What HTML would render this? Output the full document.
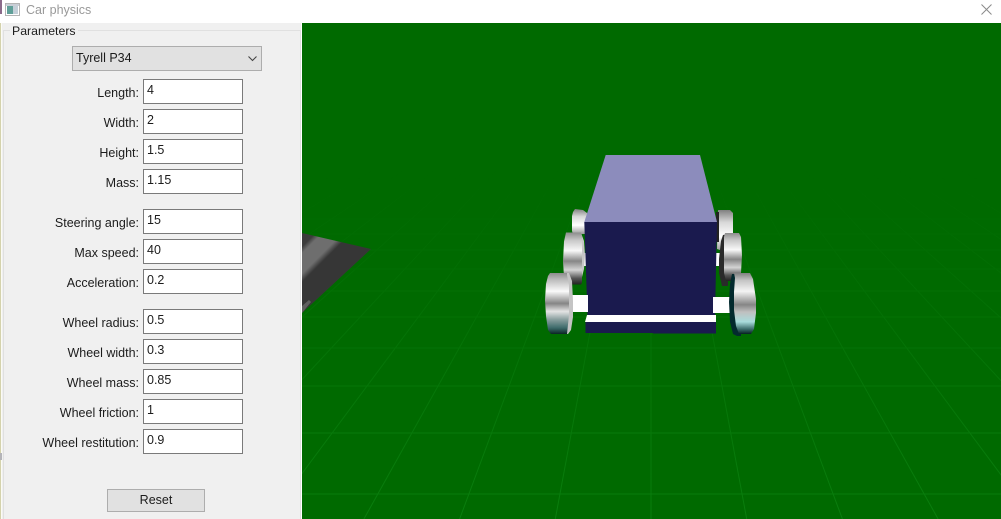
<!DOCTYPE html>
<html><head><meta charset="utf-8"><title>Car physics</title>
<style>
html,body{margin:0;padding:0;width:1001px;height:519px;overflow:hidden;background:#f0f0f0;font-family:"Liberation Sans",sans-serif;font-size:13px;color:#1c1c1c}
.a{position:absolute}
#title{left:0;top:0;width:1001px;height:23px;background:#fff}
#tt{left:26px;top:2px;color:#999;font-size:12.5px;line-height:16px}
#panel{left:0;top:23px;width:301px;height:496px;background:#f0f0f0}
#sep{left:301px;top:23px;width:1px;height:496px;background:#fff}
#e1{left:0;top:23px;width:1px;height:496px;background:#d4d2ac}
#e2{left:1px;top:23px;width:1px;height:496px;background:#fbfbf6}
#e3{left:0;top:453px;width:2px;height:7px;background:#b4b4b8}
#gb{left:3px;top:30px;width:298px;height:489px;border:1px solid #e0e0e0;border-bottom:0;box-sizing:border-box}
#lg{left:10px;top:24px;padding:0 2px;background:#f0f0f0;line-height:14px;font-size:12.3px}
#combo{left:72px;top:46px;width:190px;height:25px;box-sizing:border-box;background:#e1e1e1;border:1px solid #adadad;padding-left:3px;line-height:23px;font-size:12.5px}
.l{right:862px;text-align:right;white-space:nowrap;line-height:16px;font-size:12.5px}
.i{left:143px;width:100px;height:25px;box-sizing:border-box;background:#fff;border:1px solid #7a7a7a;padding-left:3px;line-height:21px;font-size:12.5px}
#reset{left:107px;top:489px;width:98px;height:23px;box-sizing:border-box;background:#e1e1e1;border:1px solid #adadad;text-align:center;line-height:21px;font-size:12.5px}
svg{display:block}
</style></head><body>
<div class="a" id="title"></div>
<svg class="a" style="left:0;top:0" width="30" height="23">
<rect x="0" y="0" width="2" height="14" fill="#8a6a8a"/>
<rect x="5.5" y="3.5" width="14" height="12" fill="#fff" stroke="#b4b4b4"/>
<rect x="6" y="4" width="13" height="2" fill="#c8ced6"/>
<rect x="7" y="6" width="6" height="8" fill="#5f9f98"/>
<rect x="13" y="6" width="5" height="8" fill="#c4cfd8"/>
</svg>
<div class="a" id="tt">Car physics</div>
<svg class="a" style="left:980px;top:3px" width="14" height="13"><path d="M1.500 1.500L11.500 11.500M11.500 1.500L1.500 11.500" stroke="#8a8a8a" stroke-width="1" fill="none"/></svg>

<div class="a" id="panel"></div>
<div class="a" id="sep"></div>
<div class="a" id="e1"></div><div class="a" id="e2"></div><div class="a" id="e3"></div>
<div class="a" id="gb"></div>
<div class="a" id="lg">Parameters</div>
<div class="a" id="combo">Tyrell P34</div>
<svg class="a" style="left:247px;top:55px" width="12" height="8"><path d="M1.500 1.500L5.500 5.500L9.500 1.500" stroke="#444" stroke-width="1.100" fill="none"/></svg>

<div class="a l" style="top:85px">Length:</div><div class="a i" style="top:79px">4</div>
<div class="a l" style="top:115px">Width:</div><div class="a i" style="top:109px">2</div>
<div class="a l" style="top:145px">Height:</div><div class="a i" style="top:139px">1.5</div>
<div class="a l" style="top:175px">Mass:</div><div class="a i" style="top:169px">1.15</div>
<div class="a l" style="top:215px">Steering angle:</div><div class="a i" style="top:209px">15</div>
<div class="a l" style="top:245px">Max speed:</div><div class="a i" style="top:239px">40</div>
<div class="a l" style="top:275px">Acceleration:</div><div class="a i" style="top:269px">0.2</div>
<div class="a l" style="top:315px">Wheel radius:</div><div class="a i" style="top:309px">0.5</div>
<div class="a l" style="top:345px">Wheel width:</div><div class="a i" style="top:339px">0.3</div>
<div class="a l" style="top:375px">Wheel mass:</div><div class="a i" style="top:369px">0.85</div>
<div class="a l" style="top:405px">Wheel friction:</div><div class="a i" style="top:399px">1</div>
<div class="a l" style="top:435px">Wheel restitution:</div><div class="a i" style="top:429px">0.9</div>
<div class="a" id="reset">Reset</div>

<svg class="a" style="left:302px;top:23px" width="699" height="496" viewBox="302 23 699 496">
<defs>
<linearGradient id="fade" gradientUnits="userSpaceOnUse" x1="0" y1="170" x2="0" y2="519">
<stop offset="0" stop-color="#fff" stop-opacity="0"/>
<stop offset=".3" stop-color="#fff" stop-opacity=".25"/>
<stop offset=".6" stop-color="#fff" stop-opacity=".6"/>
<stop offset="1" stop-color="#fff" stop-opacity="1"/>
</linearGradient>
<mask id="m" maskUnits="userSpaceOnUse" x="302" y="23" width="699" height="496"><rect x="302" y="23" width="699" height="496" fill="url(#fade)"/></mask>
<linearGradient id="road" gradientUnits="userSpaceOnUse" x1="302" y1="233" x2="344.500" y2="275.500">
<stop offset="0" stop-color="#3a3a3a"/><stop offset=".16" stop-color="#3c3c3c"/>
<stop offset=".24" stop-color="#6e6e6e"/><stop offset=".48" stop-color="#6e6e6e"/>
<stop offset=".58" stop-color="#363636"/><stop offset="1" stop-color="#363636"/>
</linearGradient>
<linearGradient id="wl" x1="0" y1="0" x2="0" y2="1">
<stop offset="0" stop-color="#8c8c8c"/><stop offset=".1" stop-color="#b8b8b8"/>
<stop offset=".3" stop-color="#fafafa"/><stop offset=".5" stop-color="#858585"/>
<stop offset=".63" stop-color="#e4e4e4"/><stop offset=".76" stop-color="#8ba0a0"/>
<stop offset=".9" stop-color="#3c6a6a"/><stop offset="1" stop-color="#0b2424"/>
</linearGradient>
<linearGradient id="wr" x1="0" y1="0" x2="0" y2="1">
<stop offset="0" stop-color="#808080"/><stop offset=".12" stop-color="#c4c4c4"/>
<stop offset=".3" stop-color="#f4f4f4"/><stop offset=".52" stop-color="#868686"/>
<stop offset=".64" stop-color="#c0c0c0"/><stop offset=".8" stop-color="#a8dcdc"/>
<stop offset=".92" stop-color="#3c6c6c"/><stop offset="1" stop-color="#062020"/>
</linearGradient>
<linearGradient id="wm" x1="0" y1="0" x2="0" y2="1">
<stop offset="0" stop-color="#8c8c8c"/><stop offset=".15" stop-color="#c8c8c8"/>
<stop offset=".35" stop-color="#f8f8f8"/><stop offset=".55" stop-color="#868686"/>
<stop offset=".72" stop-color="#d4d4d4"/><stop offset=".88" stop-color="#555"/>
<stop offset="1" stop-color="#222"/>
</linearGradient>
<linearGradient id="wb" x1="0" y1="0" x2="0" y2="1">
<stop offset="0" stop-color="#808080"/><stop offset=".3" stop-color="#d8d8d8"/>
<stop offset=".65" stop-color="#fff"/><stop offset="1" stop-color="#999"/>
</linearGradient>
</defs>
<rect x="302" y="23" width="699" height="496" fill="#006a00"/>
<g mask="url(#m)" stroke="#0a7e0e" stroke-width="1" fill="none">
<path d="M302 494H1001M302 433H1001M302 386H1001M302 348H1001M302 317H1001M302 291H1001M302 269H1001M302 250H1001M302 234H1001M302 219H1001M302 207H1001M302 195H1001M302 185H1001"/>
<path d="M651 4V519"/>
<path d="M651 4L555.300 519M651 4L459.600 519M651 4L363.900 519M651 4L268.200 519M651 4L172.500 519M651 4L76.800 519M651 4L-18.900 519M651 4L-114.600 519M651 4L-210.300 519M651 4L-306 519M651 4L-401.700 519M651 4L-497.400 519"/>
<path d="M651 4L746.700 519M651 4L842.400 519M651 4L938.100 519M651 4L1033.800 519M651 4L1129.500 519M651 4L1225.200 519M651 4L1320.900 519M651 4L1416.600 519M651 4L1512.300 519M651 4L1608 519M651 4L1703.700 519M651 4L1799.400 519"/>
</g>
<polygon points="302,233 371,249 302,313" fill="url(#road)"/>
<polygon points="302,313 302,306 309,300 311,302" fill="#6a6a6a" opacity=".8"/>

<!-- rear wheels -->
<path d="M575 209l8 1l4 3v21h-14l-1-3v-15l1-4z" fill="url(#wb)"/>
<path d="M718 210h12l3 3v36l-10 2l-6-2z" fill="url(#wb)"/>
<path d="M716 212h3v30h-3z" fill="#222"/>
<!-- rear axles -->
<polygon points="582,253 586,253 586,266 581,266" fill="#fff"/>
<polygon points="715,253 721,253 723,266 715,266" fill="#fff"/>
<!-- mid wheels -->
<path d="M581 233l3 8l1 14l-1 14l-3 12l-2-1v-46z" fill="#c6c6c6"/>
<path d="M566 232.500h15l1 3v47l-1 2h-15l-2-8l-1-15l1-20z" fill="url(#wm)"/>
<path d="M723 235l-2 6l-2 18l0 14l3 13h6v-52z" fill="#2a2a2a"/>
<path d="M725 233h14l2 4l1 18l-1 18l-2 8h-13l-2-8v-36z" fill="url(#wm)"/>
<!-- body -->
<polygon points="605.700,155 700,155 717,222 584.300,222" fill="#8c8cbc"/>
<polygon points="584.300,222 717,222 715,316 587.500,316" fill="#1a1a4e"/>
<!-- front axles -->
<polygon points="571,295 588,295 588,312 568,312" fill="#fff"/>
<polygon points="713,297 731,297 734,313 713,313" fill="#fff"/>
<!-- bottom strip -->
<polygon points="587,315 716,315 716,322 585,322" fill="#fff"/>
<polygon points="585.500,322 716,322 716,333.500 653,333.500 653,333 585.500,333" fill="#1a1a4e"/>
<!-- front wheels -->
<path d="M565 273l4 0l3 8l1 20l0 16l-2 13l-3 4h-4z" fill="#c4c4c4"/>
<path d="M550 273h17v2l2 10l0 30l-2 19h-16l-3-4l-2-14l-1-16l1-16l2-8z" fill="url(#wl)"/>
<path d="M732 274l-2 10l-1 18l1 20l3 12l4 2h4v-62z" fill="#032a2e"/>
<path d="M734 273h16l3 6l3 20v14l-2 16l-3 5h-12l-3-8l-2-16v-18l1-14z" fill="url(#wr)"/>
</svg>
</body></html>
